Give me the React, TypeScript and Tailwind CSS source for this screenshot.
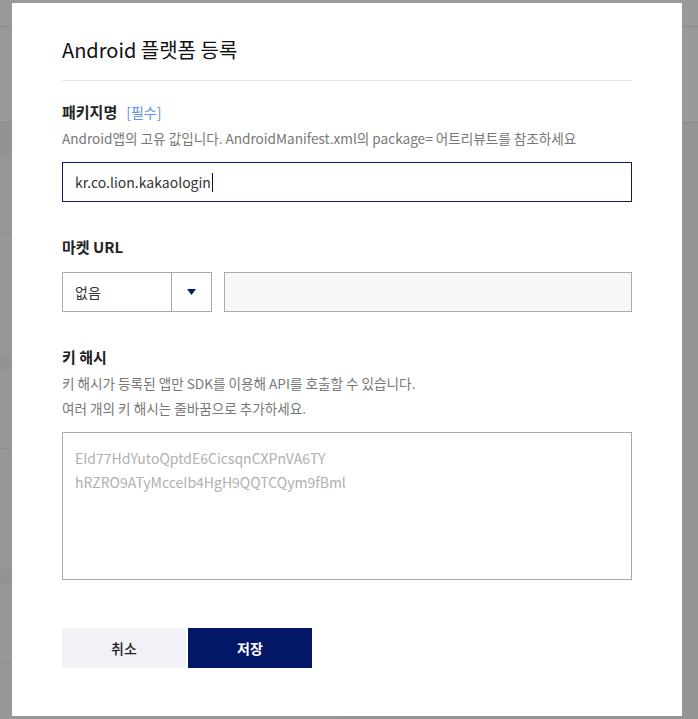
import React from "react";

const font = { fontFamily: '"Noto Sans CJK KR", "Noto Sans", sans-serif' };

// Dimmed page behind the modal
const Backdrop: React.FC = () => (
  <div className="flex h-full flex-col bg-[#979797]">
    <div className="h-[27px] border-b border-[#8b8b8b] bg-[#999999]" />
    <div className="h-[96px] border-b border-[#8b8b8b] bg-[#999999]" />
    <div className="flex flex-1">
      <div className="flex w-[340px] flex-col">
        <div className="h-[33px] bg-[#929494]" />
        <div className="h-[78px] border-b border-[#8b8b8b]" />
        <div className="h-[120px]" />
        <div className="h-[16px] bg-[#929494]" />
        <div className="h-[79px] border-b border-[#8b8b8b]" />
        <div className="h-[120px]" />
        <div className="h-[16px] bg-[#929494]" />
        <div className="h-[78px] border-b border-[#8b8b8b]" />
      </div>
      <div className="flex-1 bg-[#939494]" />
    </div>
  </div>
);

const Label: React.FC<{ children: React.ReactNode }> = ({ children }) => (
  <div className="text-[15px] font-bold leading-[22px] text-[#222]">{children}</div>
);

const Desc: React.FC<{ children: React.ReactNode }> = ({ children }) => (
  <p className="mt-[3px] text-[13.6px] leading-[25px] text-[#777]">{children}</p>
);

export default function App() {
  return (
    <div className="relative h-[719px] w-[698px] overflow-hidden" style={font}>
      <Backdrop />

      {/* Modal */}
      <div className="absolute left-[12px] top-[3px] flex h-[713px] w-[670px] flex-col bg-white px-[50px] pt-[33px]">
        {/* Header */}
        <h2 className="border-b border-[#e6e6e6] pb-[16px] text-[20px] font-normal leading-[28px] text-[#111]">
          Android 플랫폼 등록
        </h2>

        {/* Package name */}
        <div className="mt-[20px]">
          <Label>
            패키지명<span className="ml-[9px] text-[14px] font-normal text-[#5b8ff0]">[필수]</span>
          </Label>
          <Desc>Android앱의 고유 값입니다. AndroidManifest.xml의 package= 어트리뷰트를 참조하세요</Desc>
          <div className="mt-[11px] flex h-[40px] items-center border border-[#0b1a5e] px-[12px] text-[14px] text-[#333]">
            kr.co.lion.kakaologin
            <span className="ml-[1px] h-[19px] w-px bg-[#111]" />
          </div>
        </div>

        {/* Market URL */}
        <div className="mt-[34px]">
          <Label>마켓 URL</Label>
          <div className="mt-[14px] flex h-[40px] gap-[12px]">
            <div className="flex w-[150px] border border-[#aaaaaa]">
              <div className="flex flex-1 items-center px-[12px] text-[14px] text-[#333]">없음</div>
              <div className="flex w-[40px] items-center justify-center border-l border-[#aaaaaa]">
                <svg width="9" height="6" viewBox="0 0 9 6">
                  <path d="M0 0H9L4.5 6Z" fill="#0b1a66" />
                </svg>
              </div>
            </div>
            <div className="flex-1 border border-[#aaaaaa] bg-[#f6f7f7]" />
          </div>
        </div>

        {/* Key hash */}
        <div className="mt-[34px]">
          <Label>키 해시</Label>
          <Desc>
            키 해시가 등록된 앱만 SDK를 이용해 API를 호출할 수 있습니다.
            <br />
            여러 개의 키 해시는 줄바꿈으로 추가하세요.
          </Desc>
          <div className="mt-[11px] h-[148px] border border-[#aaaaaa] px-[12px] pt-[13px] text-[14px] leading-[24px] text-[#b0b0b0]">
            <div>EId77HdYutoQptdE6CicsqnCXPnVA6TY</div>
            <div>hRZRO9ATyMcceIb4HgH9QQTCQym9fBml</div>
          </div>
        </div>

        {/* Actions */}
        <div className="mt-[48px] flex gap-[2px]">
          <button className="h-[40px] w-[124px] bg-[#f1f2f7] text-[14px] font-medium text-[#222]">취소</button>
          <button className="h-[40px] w-[124px] bg-[#041767] text-[14px] font-bold text-white">저장</button>
        </div>
      </div>
    </div>
  );
}
